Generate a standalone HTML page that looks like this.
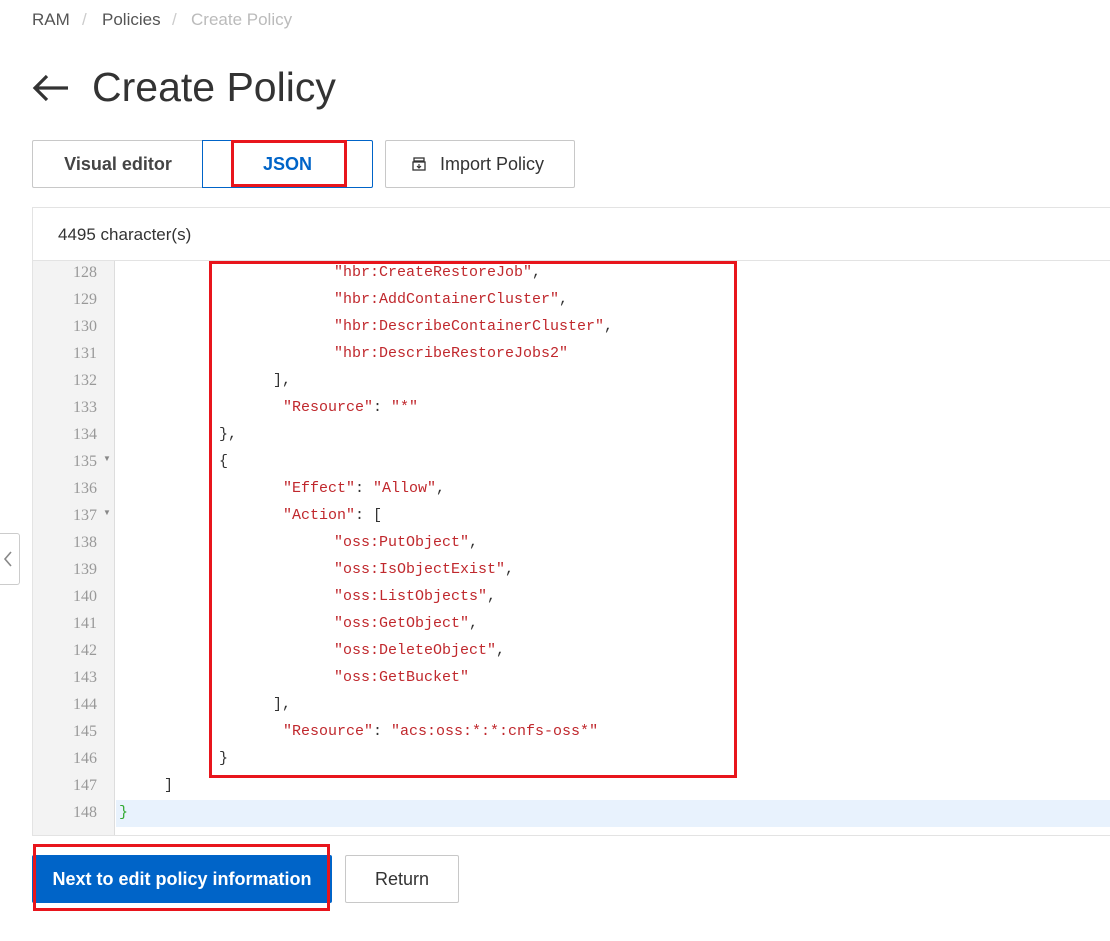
<!DOCTYPE html>
<html><head><meta charset="utf-8">
<style>
*{margin:0;padding:0;box-sizing:border-box}
body{width:1110px;height:941px;background:#fff;font-family:"Liberation Sans",sans-serif;position:relative;overflow:hidden;color:#333}
.a{position:absolute}
.bc{top:10px;font-size:17px;color:#555}
.code{font-family:"Liberation Mono",monospace;font-size:15px;color:#c0282d;white-space:pre;line-height:27px}
.ln{font-family:"Liberation Serif",serif;font-size:16px;color:#999;width:64px;text-align:right;left:33px;line-height:27px}
.red{border:3px solid #e8151c}
</style></head><body>
<div class="a bc" style="left:32px">RAM</div>
<div class="a bc" style="left:82px;color:#ccc">/</div>
<div class="a bc" style="left:102px">Policies</div>
<div class="a bc" style="left:172px;color:#ccc">/</div>
<div class="a bc" style="left:191px;color:#bbb">Create Policy</div>

<svg class="a" style="left:32px;top:74px" width="38" height="28" viewBox="0 0 38 28"><path d="M36 14H3M15 2L3 14l12 12" fill="none" stroke="#333" stroke-width="3.2"/></svg>
<div class="a" style="left:92px;top:64px;font-size:41px;color:#333">Create Policy</div>

<div class="a" style="left:32px;top:140px;width:171px;height:48px;border:1px solid #c8c8c8;border-right:none;border-radius:2px 0 0 2px;font-size:18px;font-weight:bold;text-align:center;line-height:46px;color:#444">Visual editor</div>
<div class="a" style="left:202px;top:140px;width:171px;height:48px;border:1px solid #0064c8;border-radius:0 2px 2px 0;font-size:18px;font-weight:bold;text-align:center;line-height:46px;color:#0064c8">JSON</div>
<div class="a red" style="left:231px;top:140px;width:116px;height:47px"></div>
<div class="a" style="left:385px;top:140px;width:190px;height:48px;border:1px solid #c8c8c8;border-radius:2px;font-size:18px;line-height:46px;color:#333;padding-left:54px">Import Policy</div>
<svg class="a" style="left:412px;top:157px" width="14" height="14" viewBox="0 0 14 14"><rect x="2" y="1" width="10" height="3" fill="none" stroke="#333" stroke-width="1.3"/><rect x="1" y="5" width="12" height="8" fill="none" stroke="#333" stroke-width="1.3"/><path d="M7 7v4M5 9l2 2 2-2" fill="none" stroke="#333" stroke-width="1.2"/></svg>

<div class="a" style="left:32px;top:207px;width:1090px;height:629px;border:1px solid #e3e3e3"></div>
<div class="a" style="left:33px;top:260px;width:1080px;height:1px;background:#e3e3e3"></div>
<div class="a" style="left:58px;top:225px;font-size:17px;color:#333">4495 character(s)</div>
<div class="a" style="left:33px;top:261px;width:82px;height:574px;background:#f3f3f3;border-right:1px solid #ddd"></div>
<div class="a" style="left:116px;top:800px;width:994px;height:27px;background:#e8f2fd"></div>

<div class="a ln" style="top:259px">128<br>129<br>130<br>131<br>132<br>133<br>134<br>135<br>136<br>137<br>138<br>139<br>140<br>141<br>142<br>143<br>144<br>145<br>146<br>147<br>148</div>
<div class="a" style="left:103px;top:454px;font-size:8px;color:#888">▼</div>
<div class="a" style="left:103px;top:508px;font-size:8px;color:#888">▼</div>

<div class="a code" style="left:334px;top:259px">″hbr:CreateRestoreJob″<span style="color:#333">,</span>
″hbr:AddContainerCluster″<span style="color:#333">,</span>
″hbr:DescribeContainerCluster″<span style="color:#333">,</span>
″hbr:DescribeRestoreJobs2″</div>
<div class="a code" style="left:273px;top:367px;color:#333">],</div>
<div class="a code" style="left:283px;top:394px">″Resource″<span style="color:#333">: </span>″*″</div>
<div class="a code" style="left:219px;top:421px;color:#333">},
{</div>
<div class="a code" style="left:283px;top:475px">″Effect″<span style="color:#333">: </span>″Allow″<span style="color:#333">,</span>
″Action″<span style="color:#333">: [</span></div>
<div class="a code" style="left:334px;top:529px">″oss:PutObject″<span style="color:#333">,</span>
″oss:IsObjectExist″<span style="color:#333">,</span>
″oss:ListObjects″<span style="color:#333">,</span>
″oss:GetObject″<span style="color:#333">,</span>
″oss:DeleteObject″<span style="color:#333">,</span>
″oss:GetBucket″</div>
<div class="a code" style="left:273px;top:691px;color:#333">],</div>
<div class="a code" style="left:283px;top:718px">″Resource″<span style="color:#333">: </span>″acs:oss:*:*:cnfs-oss*″</div>
<div class="a code" style="left:219px;top:745px;color:#333">}</div>
<div class="a code" style="left:164px;top:772px;color:#333">]</div>
<div class="a code" style="left:119px;top:799px;color:#3a3">}</div>
<div class="a red" style="left:209px;top:261px;width:528px;height:517px"></div>

<div class="a" style="left:0;top:533px;width:20px;height:52px;border:1px solid #ccc;border-left:none;border-radius:0 3px 3px 0;background:#fff"></div>
<svg class="a" style="left:3px;top:551px" width="10" height="16" viewBox="0 0 10 16"><path d="M8 1L2 8l6 7" fill="none" stroke="#888" stroke-width="1.6"/></svg>

<div class="a" style="left:32px;top:855px;width:300px;height:48px;background:#0064c8;border-radius:2px;color:#fff;font-size:18px;font-weight:bold;text-align:center;line-height:48px">Next to edit policy information</div>
<div class="a red" style="left:33px;top:844px;width:297px;height:67px"></div>
<div class="a" style="left:345px;top:855px;width:114px;height:48px;border:1px solid #c8c8c8;border-radius:2px;font-size:18px;text-align:center;line-height:46px;color:#333">Return</div>
</body></html>
